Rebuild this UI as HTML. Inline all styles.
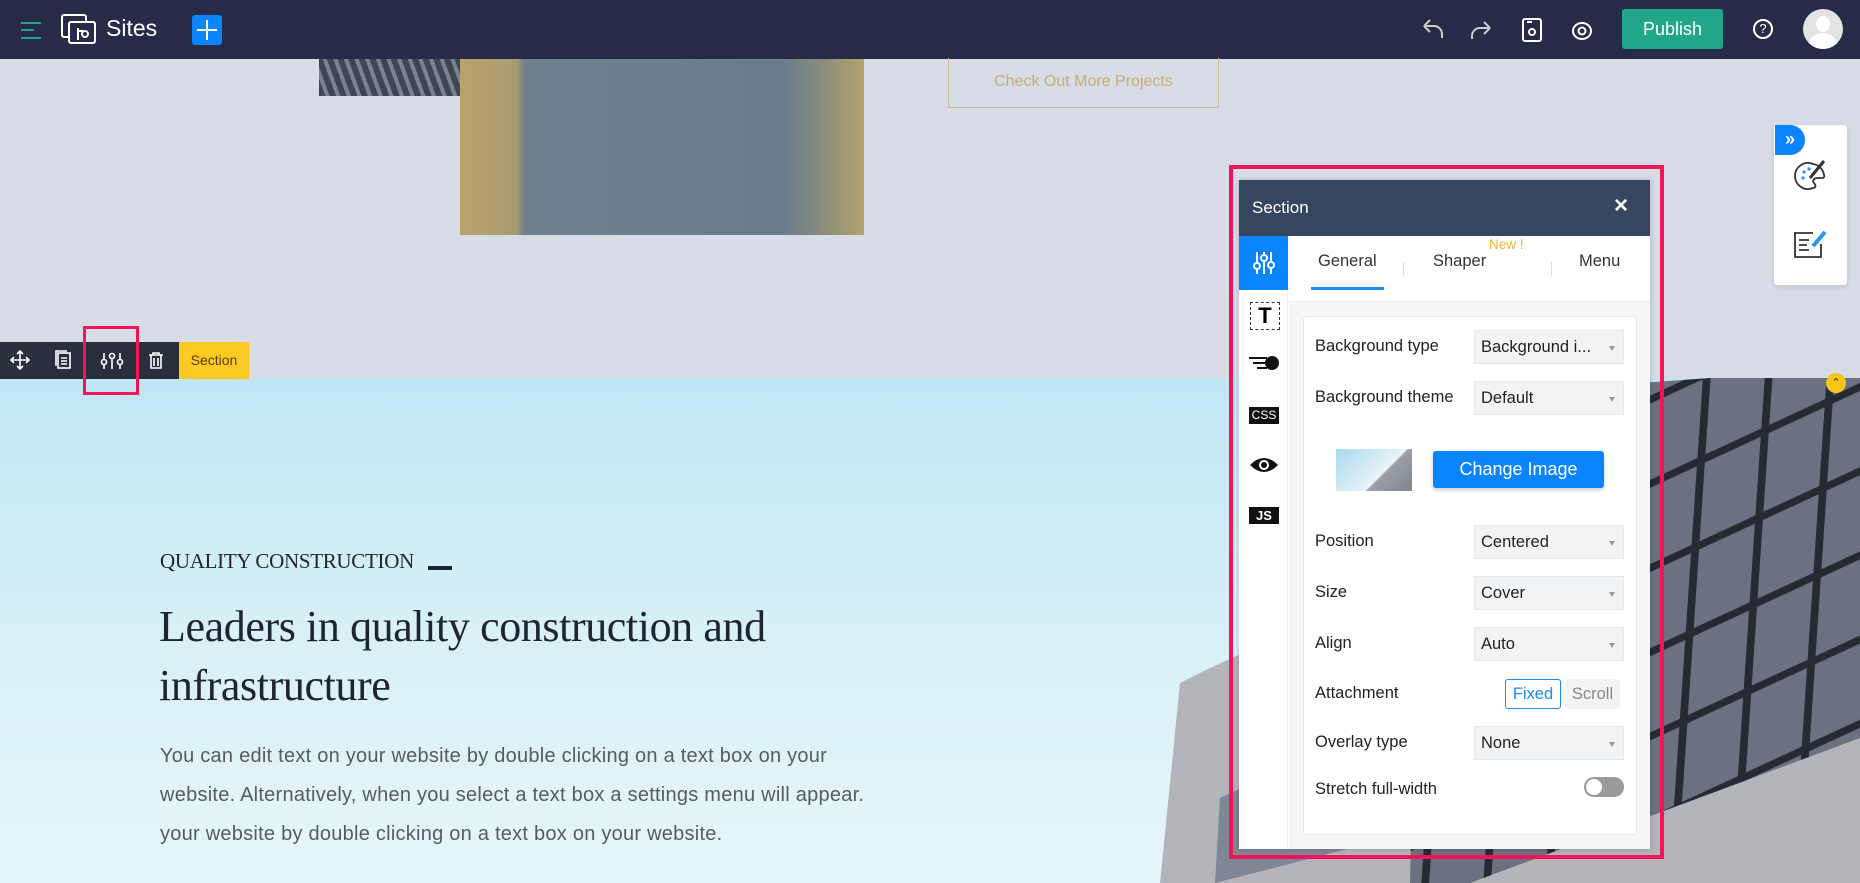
<!DOCTYPE html>
<html><head><meta charset="utf-8">
<style>
*{margin:0;padding:0;box-sizing:border-box}
body{width:1860px;height:883px;overflow:hidden;position:relative;background:#d8dce6;font-family:"Liberation Sans",sans-serif}
.abs{position:absolute}
.top{left:0;top:0;width:1860px;height:59px;background:#262b47}
.hero{left:0;top:378px;width:1860px;height:505px;background:linear-gradient(180deg,#bfe6f3 0%,#d8f0f6 50%,#e6f6f8 100%)}
.lbl{position:absolute;left:1315px;font-size:16.5px;color:#222}
.sel{position:absolute;left:1474px;width:150px;height:34px;background:#f1f3f5;border:1px solid #e6e9ec;font-size:16.5px;color:#222;padding:7px 0 0 6px}
.sel:after{content:"";position:absolute;right:8px;top:15px;border:3.5px solid transparent;border-top:5px solid #999}
</style></head><body>
<div class="abs top"></div>
<div class="abs" style="left:21px;top:22px;width:20px;height:2px;background:#1fa58a"></div>
<div class="abs" style="left:21px;top:29px;width:13px;height:2px;background:#1fa58a"></div>
<div class="abs" style="left:21px;top:37px;width:20px;height:2px;background:#1fa58a"></div>
<svg class="abs" style="left:60px;top:13px" width="38" height="32" viewBox="0 0 38 32" fill="none" stroke="#fff" stroke-width="2"><rect x="2" y="2" width="24" height="22" rx="2"/><rect x="9" y="9" width="26" height="21" rx="2" fill="#262b47"/><circle cx="25" cy="21" r="3"/><path d="M18 15v12M18 18h5"/></svg>
<div class="abs" style="left:106px;top:15px;color:#fff;font-size:23px">Sites</div>
<div class="abs" style="left:192px;top:15px;width:30px;height:30px;background:#0a84ff;border-radius:3px"></div>
<div class="abs" style="left:197px;top:29px;width:20px;height:2px;background:#fff"></div>
<div class="abs" style="left:206px;top:20px;width:2px;height:20px;background:#fff"></div>
<svg class="abs" style="left:1420px;top:16px" width="200" height="28" viewBox="0 0 200 28" fill="none" stroke="#ccc" stroke-width="2"><path d="M4 10h10a8 8 0 0 1 8 8v4M4 10l6-6M4 10l6 6"/><path d="M70 12H60a8 8 0 0 0-8 8v3M70 12l-6-6M70 12l-6 6" /><rect x="103" y="3" width="18" height="22" rx="2" stroke="#fff"/><circle cx="112" cy="16" r="3" stroke="#fff"/><path d="M107 6h5" stroke="#fff"/><ellipse cx="162" cy="15" rx="9" ry="8" stroke="#fff"/><circle cx="162" cy="15" r="3.5" stroke="#fff"/></svg>
<div class="abs" style="left:1622px;top:9px;width:101px;height:40px;background:#22a689;border-radius:3px;color:#fff;font-size:18px;text-align:center;line-height:40px">Publish</div>
<div class="abs" style="left:1753px;top:19px;width:20px;height:20px;border:2px solid #fff;border-radius:50%;color:#fff;font-size:13px;text-align:center;line-height:16px">?</div>
<div class="abs" style="left:1803px;top:9px;width:40px;height:40px;border-radius:50%;background:#e3e3e3;overflow:hidden"><div class="abs" style="left:13px;top:7px;width:14px;height:16px;border-radius:50%;background:#fff"></div><div class="abs" style="left:6px;top:24px;width:28px;height:24px;border-radius:50%;background:#fff"></div></div>

<div class="abs" style="left:319px;top:59px;width:250px;height:37px;background:repeating-linear-gradient(70deg,#3f4553 0 6px,#7a8291 6px 10px)"></div>
<div class="abs" style="left:460px;top:59px;width:404px;height:176px;background:linear-gradient(90deg,#b9a36a 0,#a99b72 14%,#6e7f8e 16%,#6a7c8c 80%,#8a8d7a 90%,#b5a46e 100%)"></div>
<div class="abs" style="left:948px;top:58px;width:271px;height:50px;border:1px solid #cfbf92;border-top:none;color:#c8ad6e;font-size:16px;text-align:center;line-height:48px">Check Out More Projects</div>

<div class="abs hero"></div>
<svg class="abs" style="left:1150px;top:378px" width="710" height="505" viewBox="0 0 710 505">
<defs><pattern id="g" width="64" height="84" patternUnits="userSpaceOnUse" patternTransform="skewY(-28) rotate(4)"><rect width="64" height="84" fill="#262a33"/><rect x="4" y="4" width="56" height="76" fill="#6b7180"/></pattern></defs>
<polygon points="30,305 60,290 700,0 710,0 710,505 10,505" fill="#b3b5ba"/>
<polygon points="260,505 270,80 420,10 560,0 710,0 710,360 320,505" fill="url(#g)"/>
<polygon points="70,420 240,340 240,460 65,505" fill="#7f8694"/>
</svg>
<div class="abs" style="left:1826px;top:373px;width:20px;height:20px;border-radius:50%;background:#f5c518;color:#333;font-size:11px;text-align:center;line-height:20px">⌃</div>

<div class="abs" style="left:160px;top:549px;font-family:'Liberation Serif',serif;font-size:21px;color:#1d2433;letter-spacing:-0.3px">QUALITY CONSTRUCTION</div>
<div class="abs" style="left:428px;top:566px;width:24px;height:4px;background:#1d2433"></div>
<div class="abs" style="left:159px;top:597px;font-family:'Liberation Serif',serif;font-size:44px;line-height:59px;color:#1d2433;letter-spacing:-0.4px;width:800px">Leaders in quality construction and<br>infrastructure</div>
<div class="abs" style="left:160px;top:737px;font-size:20px;line-height:39px;color:#555c66;width:900px;letter-spacing:0.25px;white-space:nowrap">You can edit text on your website by double clicking on a text box on your<br>website. Alternatively, when you select a text box a settings menu will appear.<br>your website by double clicking on a text box on your website.</div>

<div class="abs" style="left:0;top:342px;width:179px;height:37px;background:#2a2f3e"></div>
<div class="abs" style="left:179px;top:342px;width:70px;height:37px;background:#fdca25;color:#5a3a10;font-size:14px;line-height:37px;text-align:center">Section</div>
<svg class="abs" style="left:0;top:342px" width="179" height="37" viewBox="0 0 179 37" fill="none" stroke="#fff" stroke-width="1.6"><path d="M20 10v17M12 18h17M17 12l3-3 3 3M17 24l3 3 3-3M14 15l-3 3 3 3M26 15l3 3-3 3"/><rect x="58" y="11" width="12" height="15"/><path d="M61 16h6M61 19h6M61 22h6M56 24V9h11"/><path d="M104 11v16M112 11v16M120 11v16"/><circle cx="104" cy="20" r="2.5" fill="#2a2f3e"/><circle cx="112" cy="14" r="2.5" fill="#2a2f3e"/><circle cx="120" cy="20" r="2.5" fill="#2a2f3e"/><path d="M149 13h14M153 13v-2h6v2M151 13v13h10V13M154 16v8M158 16v8"/></svg>
<div class="abs" style="left:83px;top:326px;width:56px;height:69px;border:3px solid #f5135a"></div>

<div class="abs" style="left:1774px;top:125px;width:73px;height:160px;background:#fff;border-radius:3px;box-shadow:0 2px 6px rgba(0,0,0,.12)"></div>
<div class="abs" style="left:1775px;top:125px;width:30px;height:30px;background:#0a84ff;border-radius:0 15px 15px 0;color:#fff;font-size:18px;line-height:28px;text-align:center;font-weight:bold">»</div>
<svg class="abs" style="left:1793px;top:158px" width="36" height="36" viewBox="0 0 36 36" fill="none" stroke="#333" stroke-width="1.8"><path d="M20 6a13 13 0 1 0 0 24c3 0 3-3 1-5s0-5 3-5h5a2 2 0 0 0 2-3A13 13 0 0 0 20 6z"/><path d="M31 3L17 20" stroke-width="3"/><circle cx="11" cy="14" r="1.6" fill="#2196f3" stroke="none"/><circle cx="10" cy="20" r="1.6" fill="#2196f3" stroke="none"/><circle cx="16" cy="11" r="1.6" fill="#2196f3" stroke="none"/></svg>
<svg class="abs" style="left:1793px;top:230px" width="36" height="30" viewBox="0 0 36 30" fill="none" stroke="#333" stroke-width="1.8"><path d="M28 14v13H2V3h18M6 10h10M6 15h8M6 20h10"/><path d="M32 2L20 16" stroke="#2196f3" stroke-width="4"/></svg>

<div class="abs" style="left:1229px;top:165px;width:435px;height:694px;border:4px solid #f5135a"></div>
<div class="abs" style="left:1239px;top:180px;width:411px;height:669px;background:#fff;box-shadow:0 0 6px rgba(0,0,0,.2)"></div>
<div class="abs" style="left:1239px;top:180px;width:411px;height:56px;background:#36465e;color:#fff;font-size:17px;padding:18px 0 0 13px">Section<span style="position:absolute;right:22px;top:12px;font-size:24px;font-weight:bold">×</span></div>
<div class="abs" style="left:1239px;top:236px;width:49px;height:613px;background:#fff;border-right:1px solid #eceef0"></div>
<div class="abs" style="left:1239px;top:236px;width:49px;height:54px;background:#0a84ff"></div>
<svg class="abs" style="left:1253px;top:250px" width="22" height="26" viewBox="0 0 22 26" fill="none" stroke="#fff" stroke-width="2"><path d="M4 2v22M11 2v22M18 2v22"/><circle cx="4" cy="16" r="3" fill="#0a84ff"/><circle cx="11" cy="8" r="3" fill="#0a84ff"/><circle cx="18" cy="15" r="3" fill="#0a84ff"/></svg>
<div class="abs" style="left:1250px;top:302px;width:30px;height:28px;border:1.5px dashed #333;font-weight:bold;font-size:22px;text-align:center;line-height:26px">T</div>
<div class="abs" style="left:1249px;top:357px;width:18px;height:2px;background:#111"></div>
<div class="abs" style="left:1253px;top:362px;width:14px;height:2px;background:#111"></div>
<div class="abs" style="left:1257px;top:367px;width:10px;height:2px;background:#111"></div>
<div class="abs" style="left:1265px;top:356px;width:14px;height:14px;border-radius:50%;background:#111"></div>
<div class="abs" style="left:1249px;top:407px;width:30px;height:17px;background:#111;color:#fff;font-size:12px;text-align:center;line-height:17px">CSS</div>
<svg class="abs" style="left:1249px;top:455px" width="30" height="20" viewBox="0 0 30 20"><path d="M1 10Q15-4 29 10Q15 24 1 10z" fill="#111"/><circle cx="15" cy="10" r="5" fill="#fff"/><circle cx="15" cy="10" r="3" fill="#111"/></svg>
<div class="abs" style="left:1249px;top:507px;width:30px;height:17px;background:#111;color:#fff;font-size:13px;font-weight:bold;text-align:center;line-height:17px">JS</div>

<div class="abs" style="left:1289px;top:236px;width:361px;height:66px;background:#fff;border-bottom:1px solid #eceef0"></div>
<div class="abs" style="left:1318px;top:252px;font-size:16.5px;color:#333">General</div>
<div class="abs" style="left:1311px;top:287px;width:73px;height:3px;background:#1a8cf0"></div>
<div class="abs" style="left:1403px;top:262px;width:1px;height:14px;background:#ddd"></div>
<div class="abs" style="left:1433px;top:252px;font-size:16.5px;color:#333">Shaper</div>
<div class="abs" style="left:1489px;top:237px;font-size:13.5px;color:#f0b429">New !</div>
<div class="abs" style="left:1551px;top:262px;width:1px;height:14px;background:#ddd"></div>
<div class="abs" style="left:1579px;top:252px;font-size:16.5px;color:#333">Menu</div>
<div class="abs" style="left:1289px;top:302px;width:361px;height:547px;background:#f5f7f9"></div>
<div class="abs" style="left:1303px;top:316px;width:334px;height:519px;background:#fff;border:1px solid #e8ebee;border-radius:3px"></div>

<div class="lbl" style="top:337px">Background type</div><div class="sel" style="top:330px">Background i...</div>
<div class="lbl" style="top:388px">Background theme</div><div class="sel" style="top:381px">Default</div>
<div class="abs" style="left:1336px;top:449px;width:76px;height:42px;background:linear-gradient(135deg,#a9d8ee,#e8f4f8 60%,#9aa0a8 62%,#80868e)"></div>
<div class="abs" style="left:1433px;top:451px;width:171px;height:37px;background:#0a84ff;border-radius:3px;color:#fff;font-size:18px;text-align:center;line-height:37px;box-shadow:0 2px 4px rgba(0,0,0,.2)">Change Image</div>
<div class="lbl" style="top:532px">Position</div><div class="sel" style="top:525px">Centered</div>
<div class="lbl" style="top:583px">Size</div><div class="sel" style="top:576px">Cover</div>
<div class="lbl" style="top:634px">Align</div><div class="sel" style="top:627px">Auto</div>
<div class="lbl" style="top:684px">Attachment</div>
<div class="abs" style="left:1505px;top:679px;width:56px;height:30px;border:1px solid #1a8cf0;border-radius:3px;color:#1a8cf0;font-size:16.5px;text-align:center;line-height:28px">Fixed</div>
<div class="abs" style="left:1565px;top:679px;width:55px;height:30px;background:#f1f3f5;border-radius:3px;color:#888;font-size:16.5px;text-align:center;line-height:30px">Scroll</div>
<div class="lbl" style="top:733px">Overlay type</div><div class="sel" style="top:726px">None</div>
<div class="lbl" style="top:780px">Stretch full-width</div>
<div class="abs" style="left:1584px;top:777px;width:40px;height:20px;border-radius:10px;background:#9a9a9a"></div>
<div class="abs" style="left:1586px;top:779px;width:16px;height:16px;border-radius:50%;background:#fff"></div>
</body></html>
